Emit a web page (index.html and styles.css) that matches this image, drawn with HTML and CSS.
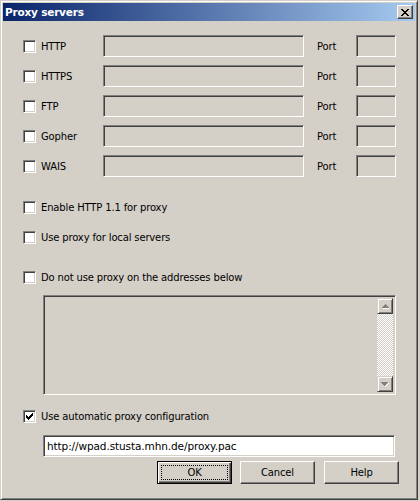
FILE: index.html
```html
<!DOCTYPE html>
<html>
<head>
<meta charset="utf-8">
<link rel="stylesheet" href="styles.css">
</head>
<body>
<div class="window">
  <div class="titlebar">
    <span class="title">Proxy servers</span>
    <span class="close">
      <svg width="8" height="7" viewBox="0 0 8 7" shape-rendering="crispEdges">
        <path fill="#000" d="M0 0h2v1H0zM6 0h2v1H6zM1 1h2v1H1zM5 1h2v1H5zM2 2h4v1H2zM3 3h2v1H3zM2 4h4v1H2zM1 5h2v1H1zM5 5h2v1H5zM0 6h2v1H0zM6 6h2v1H6z"/>
      </svg>
    </span>
  </div>
  <div class="content">
    <div class="servers">
      <div class="srow">
        <label class="slabel"><span class="cb"></span><span>HTTP</span></label>
        <span class="field host"></span>
        <span class="plabel">Port</span>
        <span class="field port"></span>
      </div>
      <div class="srow">
        <label class="slabel"><span class="cb"></span><span>HTTPS</span></label>
        <span class="field host"></span>
        <span class="plabel">Port</span>
        <span class="field port"></span>
      </div>
      <div class="srow">
        <label class="slabel"><span class="cb"></span><span>FTP</span></label>
        <span class="field host"></span>
        <span class="plabel">Port</span>
        <span class="field port"></span>
      </div>
      <div class="srow">
        <label class="slabel"><span class="cb"></span><span>Gopher</span></label>
        <span class="field host"></span>
        <span class="plabel">Port</span>
        <span class="field port"></span>
      </div>
      <div class="srow">
        <label class="slabel"><span class="cb"></span><span>WAIS</span></label>
        <span class="field host"></span>
        <span class="plabel">Port</span>
        <span class="field port"></span>
      </div>
    </div>

    <label class="crow c-enable"><span class="cb"></span><span>Enable HTTP 1.1 for proxy</span></label>
    <label class="crow c-local"><span class="cb"></span><span>Use proxy for local servers</span></label>
    <label class="crow c-nouse"><span class="cb"></span><span>Do not use proxy on the addresses below</span></label>

    <div class="listbox">
      <div class="listarea"></div>
      <div class="scrollbar">
        <span class="sbtn">
          <svg width="7" height="5" viewBox="0 0 7 5" shape-rendering="crispEdges">
            <path fill="#fff" d="M4 1h1v1H4zM5 2h1v1H5zM6 3h1v1H6zM1 4h7v1H1z"/>
            <path fill="#808080" d="M3 0h1v1H3zM2 1h3v1H2zM1 2h5v1H1zM0 3h7v1H0z"/>
          </svg>
        </span>
        <span class="track"></span>
        <span class="sbtn">
          <svg width="8" height="5" viewBox="0 0 8 5" shape-rendering="crispEdges">
            <path fill="#fff" d="M7 1h1v1H7zM6 2h1v1H6zM5 3h1v1H5zM4 4h1v1H4z"/>
            <path fill="#808080" d="M0 0h7v1H0zM1 1h5v1H1zM2 2h3v1H2zM3 3h1v1H3z"/>
          </svg>
        </span>
      </div>
    </div>

    <label class="crow c-auto"><span class="cb checked">
      <svg width="7" height="7" viewBox="0 0 7 7" shape-rendering="crispEdges">
        <path fill="#000" d="M6 0h1v1H6zM5 1h2v1H5zM0 2h1v1H0zM4 2h3v1H4zM0 3h2v1H0zM3 3h3v1H3zM0 4h5v1H0zM1 5h3v1H1zM2 6h1v1H2z"/>
      </svg>
    </span><span>Use automatic proxy configuration</span></label>

    <div class="field url">http://wpad.stusta.mhn.de/proxy.pac</div>

    <div class="buttons">
      <button class="btn default"><span class="focus">OK</span></button>
      <button class="btn">Cancel</button>
      <button class="btn help">Help</button>
    </div>
  </div>
</div>
</body>
</html>
```
FILE: styles.css
```css
html, body {
  margin: 0;
  padding: 0;
  background: #d4d0c8;
}
body {
  width: 420px;
  height: 501px;
  overflow: hidden;
  font-family: "DejaVu Sans", "Liberation Sans", sans-serif;
  font-size: 10px;
  letter-spacing: -0.15px;
  color: #000;
}
.window {
  box-sizing: border-box;
  width: 418px;
  height: 500px;
  border: 1px solid;
  border-color: #d4d0c8 #404040 #404040 #d4d0c8;
  box-shadow: inset 1px 1px #fff, inset -1px -1px #808080;
  padding: 2px;
  background: #d4d0c8;
}
.titlebar {
  height: 18px;
  display: flex;
  align-items: center;
  justify-content: space-between;
  padding: 0 2px 0 2px;
  background: linear-gradient(to right, #0a246a, #a6caf0);
}
.title {
  color: #fff;
  font-weight: bold;
  font-size: 10.5px;
  letter-spacing: -0.2px;
}
.close {
  box-sizing: border-box;
  width: 16px;
  height: 14px;
  display: flex;
  align-items: center;
  justify-content: center;
  background: #d4d0c8;
  border: 1px solid;
  border-color: #fff #404040 #404040 #fff;
  box-shadow: inset -1px -1px #808080;
  padding-right: 1px;
}
.content {
  padding: 14px 0 0 20px;
  display: flex;
  flex-direction: column;
  align-items: flex-start;
}
.servers {
  display: flex;
  flex-direction: column;
  gap: 8px;
}
.srow {
  display: flex;
  align-items: center;
  height: 22px;
}
.slabel {
  width: 80px;
  display: flex;
  align-items: center;
  gap: 5px;
}
.cb {
  box-sizing: border-box;
  width: 13px;
  height: 13px;
  flex: none;
  background: #fff;
  border: 1px solid;
  border-color: #808080 #fff #fff #808080;
  box-shadow: inset 1px 1px #404040, inset -1px -1px #d4d0c8;
  display: flex;
  align-items: center;
  justify-content: center;
}
.field {
  box-sizing: border-box;
  height: 22px;
  background: #d4d0c8;
  border: 1px solid;
  border-color: #808080 #fff #fff #808080;
  box-shadow: inset 1px 1px #404040, inset -1px -1px #d4d0c8;
}
.host { width: 201px; }
.plabel {
  width: 39px;
  margin-left: 13px;
  padding-top: 1px;
}
.port { width: 40px; }
.crow {
  height: 13px;
  display: flex;
  align-items: center;
  gap: 5px;
}
.c-enable { margin-top: 24px; }
.c-local { margin-top: 17px; }
.c-nouse { margin-top: 27px; }
.c-auto { margin-top: 15px; }
.listbox {
  box-sizing: border-box;
  margin: 11px 0 0 20px;
  width: 353px;
  height: 100px;
  display: flex;
  border: 1px solid;
  border-color: #808080 #fff #fff #808080;
  box-shadow: inset 1px 1px #404040, inset -1px -1px #d4d0c8;
  padding: 2px 2px 2px 2px;
}
.listarea { flex: 1; }
.scrollbar {
  width: 16px;
  display: flex;
  flex-direction: column;
}
.sbtn {
  box-sizing: border-box;
  width: 16px;
  height: 16px;
  display: flex;
  align-items: center;
  justify-content: center;
  background: #d4d0c8;
  border: 1px solid;
  border-color: #d4d0c8 #404040 #404040 #d4d0c8;
  box-shadow: inset 1px 1px #fff, inset -1px -1px #808080;
}
.track {
  flex: 1;
  background-image: conic-gradient(#fff 25%, #d4d0c8 0 50%, #fff 0 75%, #d4d0c8 0);
  background-size: 2px 2px;
}
.url {
  margin: 12px 0 0 20px;
  width: 352px;
  background: #fff;
  display: flex;
  align-items: center;
  padding-left: 3px;
  font-size: 10.5px;
  letter-spacing: -0.1px;
}
.buttons {
  margin: 4px 0 0 134px;
  display: flex;
  gap: 8px;
}
.btn {
  box-sizing: border-box;
  width: 75px;
  height: 23px;
  font: inherit;
  letter-spacing: inherit;
  color: #000;
  background: #d4d0c8;
  border: 1px solid;
  border-color: #fff #404040 #404040 #fff;
  box-shadow: inset -1px -1px #808080;
  padding: 0;
  display: flex;
  align-items: center;
  justify-content: center;
}
.btn.default {
  border: 1px solid #000;
  box-shadow: inset 1px 1px #fff, inset -1px -1px #404040, inset -2px -2px #808080;
  padding: 3px;
}
.focus {
  flex: 1;
  align-self: stretch;
  display: flex;
  align-items: center;
  justify-content: center;
  border: 1px dotted #000;
}
.help { margin-left: 1px; }
```
